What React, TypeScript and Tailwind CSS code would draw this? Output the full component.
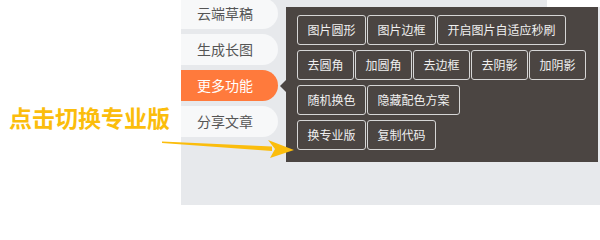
import React from "react";

const sideItems = [
  { label: "云端草稿", active: false },
  { label: "生成长图", active: false },
  { label: "更多功能", active: true },
  { label: "分享文章", active: false },
];

const buttonRows = [
  ["图片圆形", "图片边框", "开启图片自适应秒刷"],
  ["去圆角", "加圆角", "去边框", "去阴影", "加阴影"],
  ["随机换色", "隐藏配色方案"],
  ["换专业版", "复制代码"],
];

const font = { fontFamily: '"Noto Sans CJK SC", "Noto Sans", sans-serif' };

export default function App() {
  return (
    <div className="relative flex w-[600px] h-[205px] overflow-hidden bg-white" style={font}>
      {/* Left hint */}
      <div className="w-[181px] shrink-0 pt-[106px] pl-[9px]">
        <div className="text-[23px] leading-none font-bold text-[#fbbd0c] whitespace-nowrap">
          点击切换专业版
        </div>
      </div>

      {/* Editor side */}
      <div className="relative flex flex-1 bg-[#e7e9ec]">
        <div className="absolute right-0 top-0 w-[53px] h-[7px] bg-white" />

        <div className="flex flex-col gap-[5px] mt-[-2px] w-[97px] shrink-0">
          {sideItems.map((item) => (
            <div
              key={item.label}
              className={
                item.active
                  ? "h-[31px] flex items-center pl-[16px] rounded-r-full bg-[#ff7a3c] text-white text-[14px]"
                  : "h-[31px] flex items-center pl-[16px] rounded-r-full bg-[#f7f8f9] text-[#555] text-[14px]"
              }
            >
              {item.label}
            </div>
          ))}
        </div>

        {/* Popover */}
        <div className="relative ml-[8px] mt-[7px] w-[312px] h-[155px] bg-[#4b4542] pl-[11px] pt-[8px] flex flex-col gap-[5px]">
          <div className="absolute left-[-6px] top-[73px] w-0 h-0 border-y-[6px] border-y-transparent border-r-[6px] border-r-[#4b4542]" />
          {buttonRows.map((row, i) => (
            <div key={i} className="flex gap-[1px]">
              {row.map((b) => (
                <div
                  key={b}
                  className="h-[30px] flex items-center px-[9.5px] border border-[#d6d6d6] rounded-[3px] text-[12px] text-[#f0f0f0] whitespace-nowrap"
                >
                  {b}
                </div>
              ))}
            </div>
          ))}
        </div>
      </div>

      {/* Arrow */}
      <svg className="absolute left-0 top-0 pointer-events-none" width="600" height="205">
        <polygon points="162,141.5 272,146.5 272,151 162,143" fill="#fbbd0c" />
        <polygon points="268,140 294,150 270,158 275,149" fill="#fbbd0c" />
      </svg>
    </div>
  );
}
